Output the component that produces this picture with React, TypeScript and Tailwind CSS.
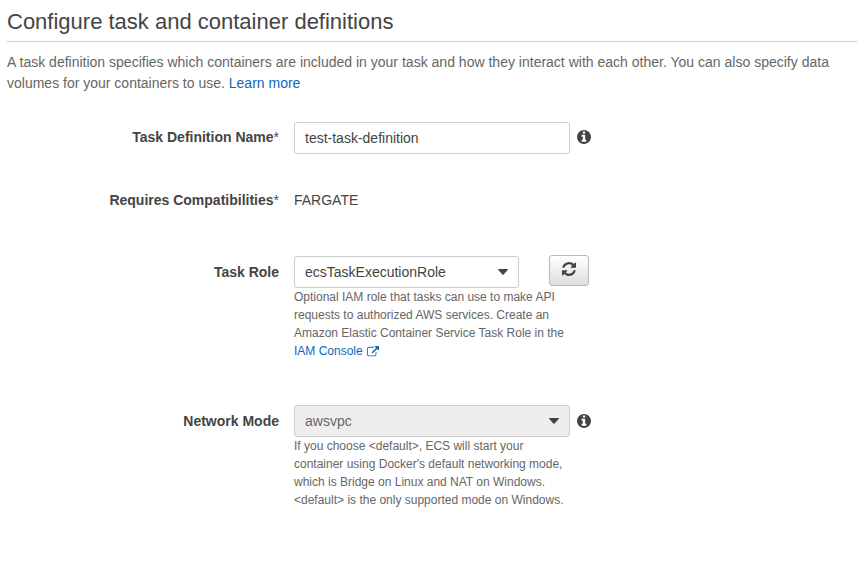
import type { ReactNode } from "react";

function Label({ children, required }: { children: ReactNode; required?: boolean }) {
  return (
    <div className="w-[279px] shrink-0 text-right font-bold">
      {children}
      {required && <span className="font-normal text-[#444c78]">*</span>}
    </div>
  );
}

function InfoIcon() {
  return (
    <svg viewBox="128 128 1536 1536" className="ml-[7px] size-[14px] shrink-0 fill-[#444]">
      <path d="M1152 1376v-160q0-14-9-23t-23-9h-96v-512q0-14-9-23t-23-9h-320q-14 0-23 9t-9 23v160q0 14 9 23t23 9h96v320h-96q-14 0-23 9t-9 23v160q0 14 9 23t23 9h448q14 0 23-9t9-23zm-128-896v-160q0-14-9-23t-23-9h-192q-14 0-23 9t-9 23v160q0 14 9 23t23 9h192q14 0 23-9t9-23zm640 416q0 209-103 385.5t-279.5 279.5-385.5 103-385.5-103-279.5-279.5-103-385.5 103-385.5 279.5-279.5 385.5-103 385.5 103 279.5 279.5 103 385.5z" />
    </svg>
  );
}

function RefreshIcon() {
  return (
    <svg viewBox="128 128 1536 1536" className="size-[14px] fill-[#444]">
      <path d="M1639 1056q0 5-1 7-64 268-268 434.5t-478 166.5q-146 0-282.5-55t-243.5-157l-129 129q-19 19-45 19t-45-19-19-45v-448q0-26 19-45t45-19h448q26 0 45 19t19 45-19 45l-137 137q71 66 161 102t187 36q134 0 250-65t186-179q11-17 53-117 8-23 30-23h192q13 0 22.5 9.5t9.5 22.5zm25-800v448q0 26-19 45t-45 19h-448q-26 0-45-19t-19-45 19-45l138-138q-148-137-349-137-134 0-250 65t-186 179q-11 17-53 117-8 23-30 23h-199q-13 0-22.5-9.5t-9.5-22.5v-7q65-268 270-434.5t480-166.5q146 0 284 55.5t245 156.5l130-129q19-19 45-19t45 19 19 45z" />
    </svg>
  );
}

function ExternalIcon() {
  return (
    <svg viewBox="0 0 1792 1792" className="mt-1 ml-1 size-3 fill-[#1166bb]">
      <path d="M1408 928v320q0 119-84.5 203.5t-203.5 84.5h-832q-119 0-203.5-84.5t-84.5-203.5v-832q0-119 84.5-203.5t203.5-84.5h704q14 0 23 9t9 23v64q0 14-9 23t-23 9h-704q-66 0-113 47t-47 113v832q0 66 47 113t113 47h832q66 0 113-47t47-113v-320q0-14 9-23t23-9h64q14 0 23 9t9 23zm384-864v512q0 26-19 45t-45 19-45-19l-176-176-652 652q-10 10-23 10t-23-10l-114-114q-10-10-10-23t10-23l652-652-176-176q-19-19-19-45t19-45 45-19h512q26 0 45 19t19 45z" />
    </svg>
  );
}

function Caret() {
  return (
    <svg viewBox="0 0 10 6" className="h-[6px] w-[10px] fill-[#444]">
      <path d="M0.7 0h8.6q1.1 0 .4.9L5.6 5.6q-.6.6-1.2 0L.3.9Q-.4 0 .7 0z" />
    </svg>
  );
}

export default function App() {
  return (
    <div className="h-[579px] bg-white font-['Liberation_Sans',Arial,sans-serif] text-[14px] leading-5 text-[#444]">
      <header className="px-[7px] pt-2">
        <h1 className="h-[34px] w-[850px] border-b border-[#ccc] text-[22px] leading-7">Configure task and container definitions</h1>
        <p className="pt-[10px] leading-[21px] text-[#666]">
          <span className="[word-spacing:0.04px]">
            A task definition specifies which containers are included in your task and how they interact with each other. You can also specify data
          </span>
          <br />
          volumes for your containers to use. <a className="text-[#1166bb]">Learn more</a>
        </p>
      </header>
      <main className="pt-7">
        <div className="flex h-[68px]">
          <div className="pt-[5px]">
            <Label required>Task Definition Name</Label>
          </div>
          <div className="ml-[15px] flex h-8 w-[276px] items-center rounded-[3px] border border-[#ccc] px-[10px]">test-task-definition</div>
          <div className="pt-2">
            <InfoIcon />
          </div>
        </div>
        <div className="flex h-[66px]">
          <Label required>Requires Compatibilities</Label>
          <div className="ml-[15px]">FARGATE</div>
        </div>
        <div className="flex h-[149px]">
          <div className="pt-[6px]">
            <Label>Task Role</Label>
          </div>
          <div className="ml-[15px] w-[296px]">
            <div className="flex h-8 justify-between">
              <div className="flex h-8 w-[225px] items-center justify-between rounded-[3px] border border-[#ccc] px-[10px]">
                ecsTaskExecutionRole
                <Caret />
              </div>
              <button className="-mt-px mr-px flex h-[31px] w-10 items-center justify-center rounded-[3px] border border-[#b8b8b8] bg-linear-to-b from-white to-[#dddddd] pb-[3px]">
                <RefreshIcon />
              </button>
            </div>
            <div className="text-[12px] leading-[18px] whitespace-nowrap text-[#666]">
              Optional IAM role that tasks can use to make API
              <br />
              requests to authorized AWS services. Create an
              <br />
              Amazon Elastic Container Service Task Role in the
              <br />
              <a className="flex text-[#1166bb]">
                IAM Console
                <ExternalIcon />
              </a>
            </div>
          </div>
        </div>
        <div className="flex">
          <div className="pt-[6px]">
            <Label>Network Mode</Label>
          </div>
          <div className="ml-[15px] w-[276px]">
            <div className="flex h-8 items-center justify-between rounded-[3px] border border-[#ccc] bg-[#eee] px-[10px] text-[#666]">
              awsvpc
              <Caret />
            </div>
            <div className="text-[12px] leading-[18px] whitespace-nowrap text-[#666]">
              If you choose &lt;default&gt;, ECS will start your
              <br />
              container using Docker's default networking mode,
              <br />
              which is Bridge on Linux and NAT on Windows.
              <br />
              &lt;default&gt; is the only supported mode on Windows.
            </div>
          </div>
          <div className="pt-[9px]">
            <InfoIcon />
          </div>
        </div>
      </main>
    </div>
  );
}
